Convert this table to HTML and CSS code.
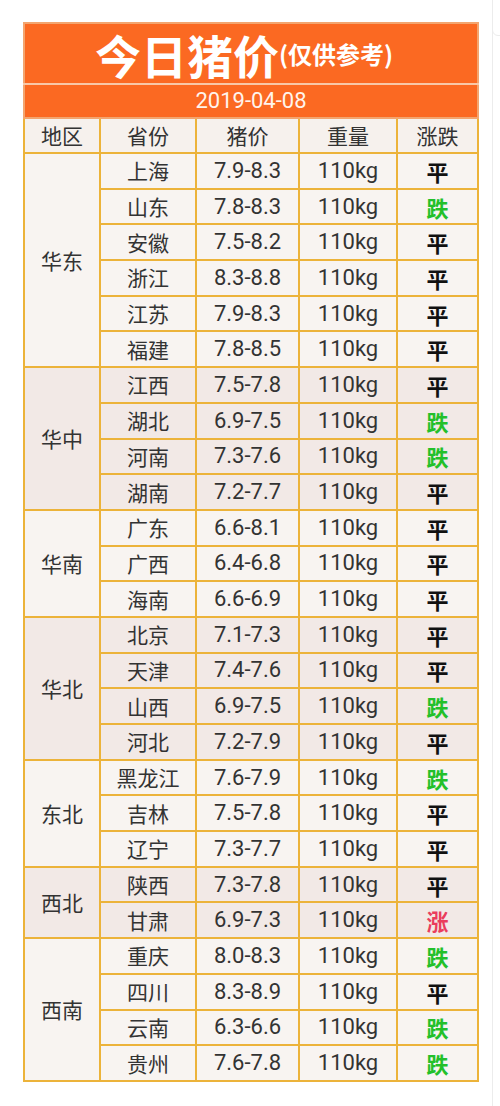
FILE: index.html
```html
<!DOCTYPE html>
<html lang="zh">
<head>
<meta charset="utf-8">
<link rel="stylesheet" href="styles.css">
</head>
<body>
<div class="page">
  <table class="price">
    <colgroup>
      <col class="c1"><col class="c2"><col class="c3"><col class="c4"><col class="c5">
    </colgroup>
    <tr class="title-row"><td colspan="5"><span class="big">今日猪价</span><span class="small">(仅供参考)</span></td></tr>
    <tr class="date-row"><td colspan="5">2019-04-08</td></tr>
    <tr class="head-row"><td>地区</td><td>省份</td><td>猪价</td><td>重量</td><td>涨跌</td></tr>

    <tbody class="light">
      <tr><td rowspan="6" class="region">华东</td><td>上海</td><td class="num">7.9-8.3</td><td class="num">110kg</td><td class="flat">平</td></tr>
      <tr><td>山东</td><td class="num">7.8-8.3</td><td class="num">110kg</td><td class="down">跌</td></tr>
      <tr><td>安徽</td><td class="num">7.5-8.2</td><td class="num">110kg</td><td class="flat">平</td></tr>
      <tr><td>浙江</td><td class="num">8.3-8.8</td><td class="num">110kg</td><td class="flat">平</td></tr>
      <tr><td>江苏</td><td class="num">7.9-8.3</td><td class="num">110kg</td><td class="flat">平</td></tr>
      <tr><td>福建</td><td class="num">7.8-8.5</td><td class="num">110kg</td><td class="flat">平</td></tr>
    </tbody>
    <tbody class="dark">
      <tr><td rowspan="4" class="region">华中</td><td>江西</td><td class="num">7.5-7.8</td><td class="num">110kg</td><td class="flat">平</td></tr>
      <tr><td>湖北</td><td class="num">6.9-7.5</td><td class="num">110kg</td><td class="down">跌</td></tr>
      <tr><td>河南</td><td class="num">7.3-7.6</td><td class="num">110kg</td><td class="down">跌</td></tr>
      <tr><td>湖南</td><td class="num">7.2-7.7</td><td class="num">110kg</td><td class="flat">平</td></tr>
    </tbody>
    <tbody class="light">
      <tr><td rowspan="3" class="region">华南</td><td>广东</td><td class="num">6.6-8.1</td><td class="num">110kg</td><td class="flat">平</td></tr>
      <tr><td>广西</td><td class="num">6.4-6.8</td><td class="num">110kg</td><td class="flat">平</td></tr>
      <tr><td>海南</td><td class="num">6.6-6.9</td><td class="num">110kg</td><td class="flat">平</td></tr>
    </tbody>
    <tbody class="dark">
      <tr><td rowspan="4" class="region">华北</td><td>北京</td><td class="num">7.1-7.3</td><td class="num">110kg</td><td class="flat">平</td></tr>
      <tr><td>天津</td><td class="num">7.4-7.6</td><td class="num">110kg</td><td class="flat">平</td></tr>
      <tr><td>山西</td><td class="num">6.9-7.5</td><td class="num">110kg</td><td class="down">跌</td></tr>
      <tr><td>河北</td><td class="num">7.2-7.9</td><td class="num">110kg</td><td class="flat">平</td></tr>
    </tbody>
    <tbody class="light">
      <tr><td rowspan="3" class="region">东北</td><td>黑龙江</td><td class="num">7.6-7.9</td><td class="num">110kg</td><td class="down">跌</td></tr>
      <tr><td>吉林</td><td class="num">7.5-7.8</td><td class="num">110kg</td><td class="flat">平</td></tr>
      <tr><td>辽宁</td><td class="num">7.3-7.7</td><td class="num">110kg</td><td class="flat">平</td></tr>
    </tbody>
    <tbody class="dark">
      <tr><td rowspan="2" class="region">西北</td><td>陕西</td><td class="num">7.3-7.8</td><td class="num">110kg</td><td class="flat">平</td></tr>
      <tr><td>甘肃</td><td class="num">6.9-7.3</td><td class="num">110kg</td><td class="up">涨</td></tr>
    </tbody>
    <tbody class="light">
      <tr><td rowspan="4" class="region">西南</td><td>重庆</td><td class="num">8.0-8.3</td><td class="num">110kg</td><td class="down">跌</td></tr>
      <tr><td>四川</td><td class="num">8.3-8.9</td><td class="num">110kg</td><td class="flat">平</td></tr>
      <tr><td>云南</td><td class="num">6.3-6.6</td><td class="num">110kg</td><td class="down">跌</td></tr>
      <tr><td>贵州</td><td class="num">7.6-7.8</td><td class="num">110kg</td><td class="down">跌</td></tr>
    </tbody>
  </table>
  <div class="edge"></div>
</div>
</body>
</html>
```

FILE: styles.css
```css
html, body {
  margin: 0;
  padding: 0;
  background: #ffffff;
}

.page {
  position: relative;
  width: 500px;
  height: 1106px;
  padding: 22px 0 0 23px;
  box-sizing: border-box;
  font-family: "Noto Sans CJK SC", "Noto Sans", sans-serif;
}

.price {
  width: 454px;
  border-collapse: collapse;
  table-layout: fixed;
  color: #333333;
}

.c1 { width: 76px; }
.c2 { width: 96px; }
.c3 { width: 103px; }
.c4 { width: 98px; }
.c5 { width: 81px; }

.price td {
  border: 2px solid #ecb33a;
  text-align: center;
  vertical-align: middle;
  padding: 0;
  font-size: 21px;
  line-height: 1;
  height: 33.7px;
}

.title-row td {
  height: 59px;
  background: #fb6922;
  color: #ffffff;
  border-color: #f3a56f;
  border-bottom: 2px solid #f8c8a8;
  font-weight: 700;
  padding-right: 14px;
}

.title-row .big {
  font-size: 46px;
  letter-spacing: 0;
  vertical-align: middle;
}

.title-row .small {
  font-size: 24px;
  vertical-align: middle;
}

.date-row td {
  height: 32px;
  background: #fb6922;
  color: #fff4ec;
  border-color: #f3a56f;
  border-top: none;
  font-family: Roboto, "Noto Sans", sans-serif;
  font-size: 22px;
}

.head-row td {
  height: 33px;
  background: #f6f1ed;
}

.light td { background: #f8f4f1; }
.dark td { background: #f2e9e6; }

.num {
  font-family: Roboto, "Noto Sans", sans-serif;
  font-size: 22px !important;
}

.flat, .down, .up {
  font-weight: 700;
  font-size: 22px !important;
}

.flat { color: #111111; }
.down { color: #23c02a; }
.up { color: #ea3d5c; }

.edge {
  position: absolute;
  left: 492px;
  top: 0;
  width: 10px;
  height: 1106px;
  border-left: 1px solid #ececec;
}

.edge::before {
  content: "";
  position: absolute;
  left: -1px;
  top: -10px;
  width: 12px;
  height: 44px;
  border: 1px solid #ececec;
  border-radius: 6px;
}
```
